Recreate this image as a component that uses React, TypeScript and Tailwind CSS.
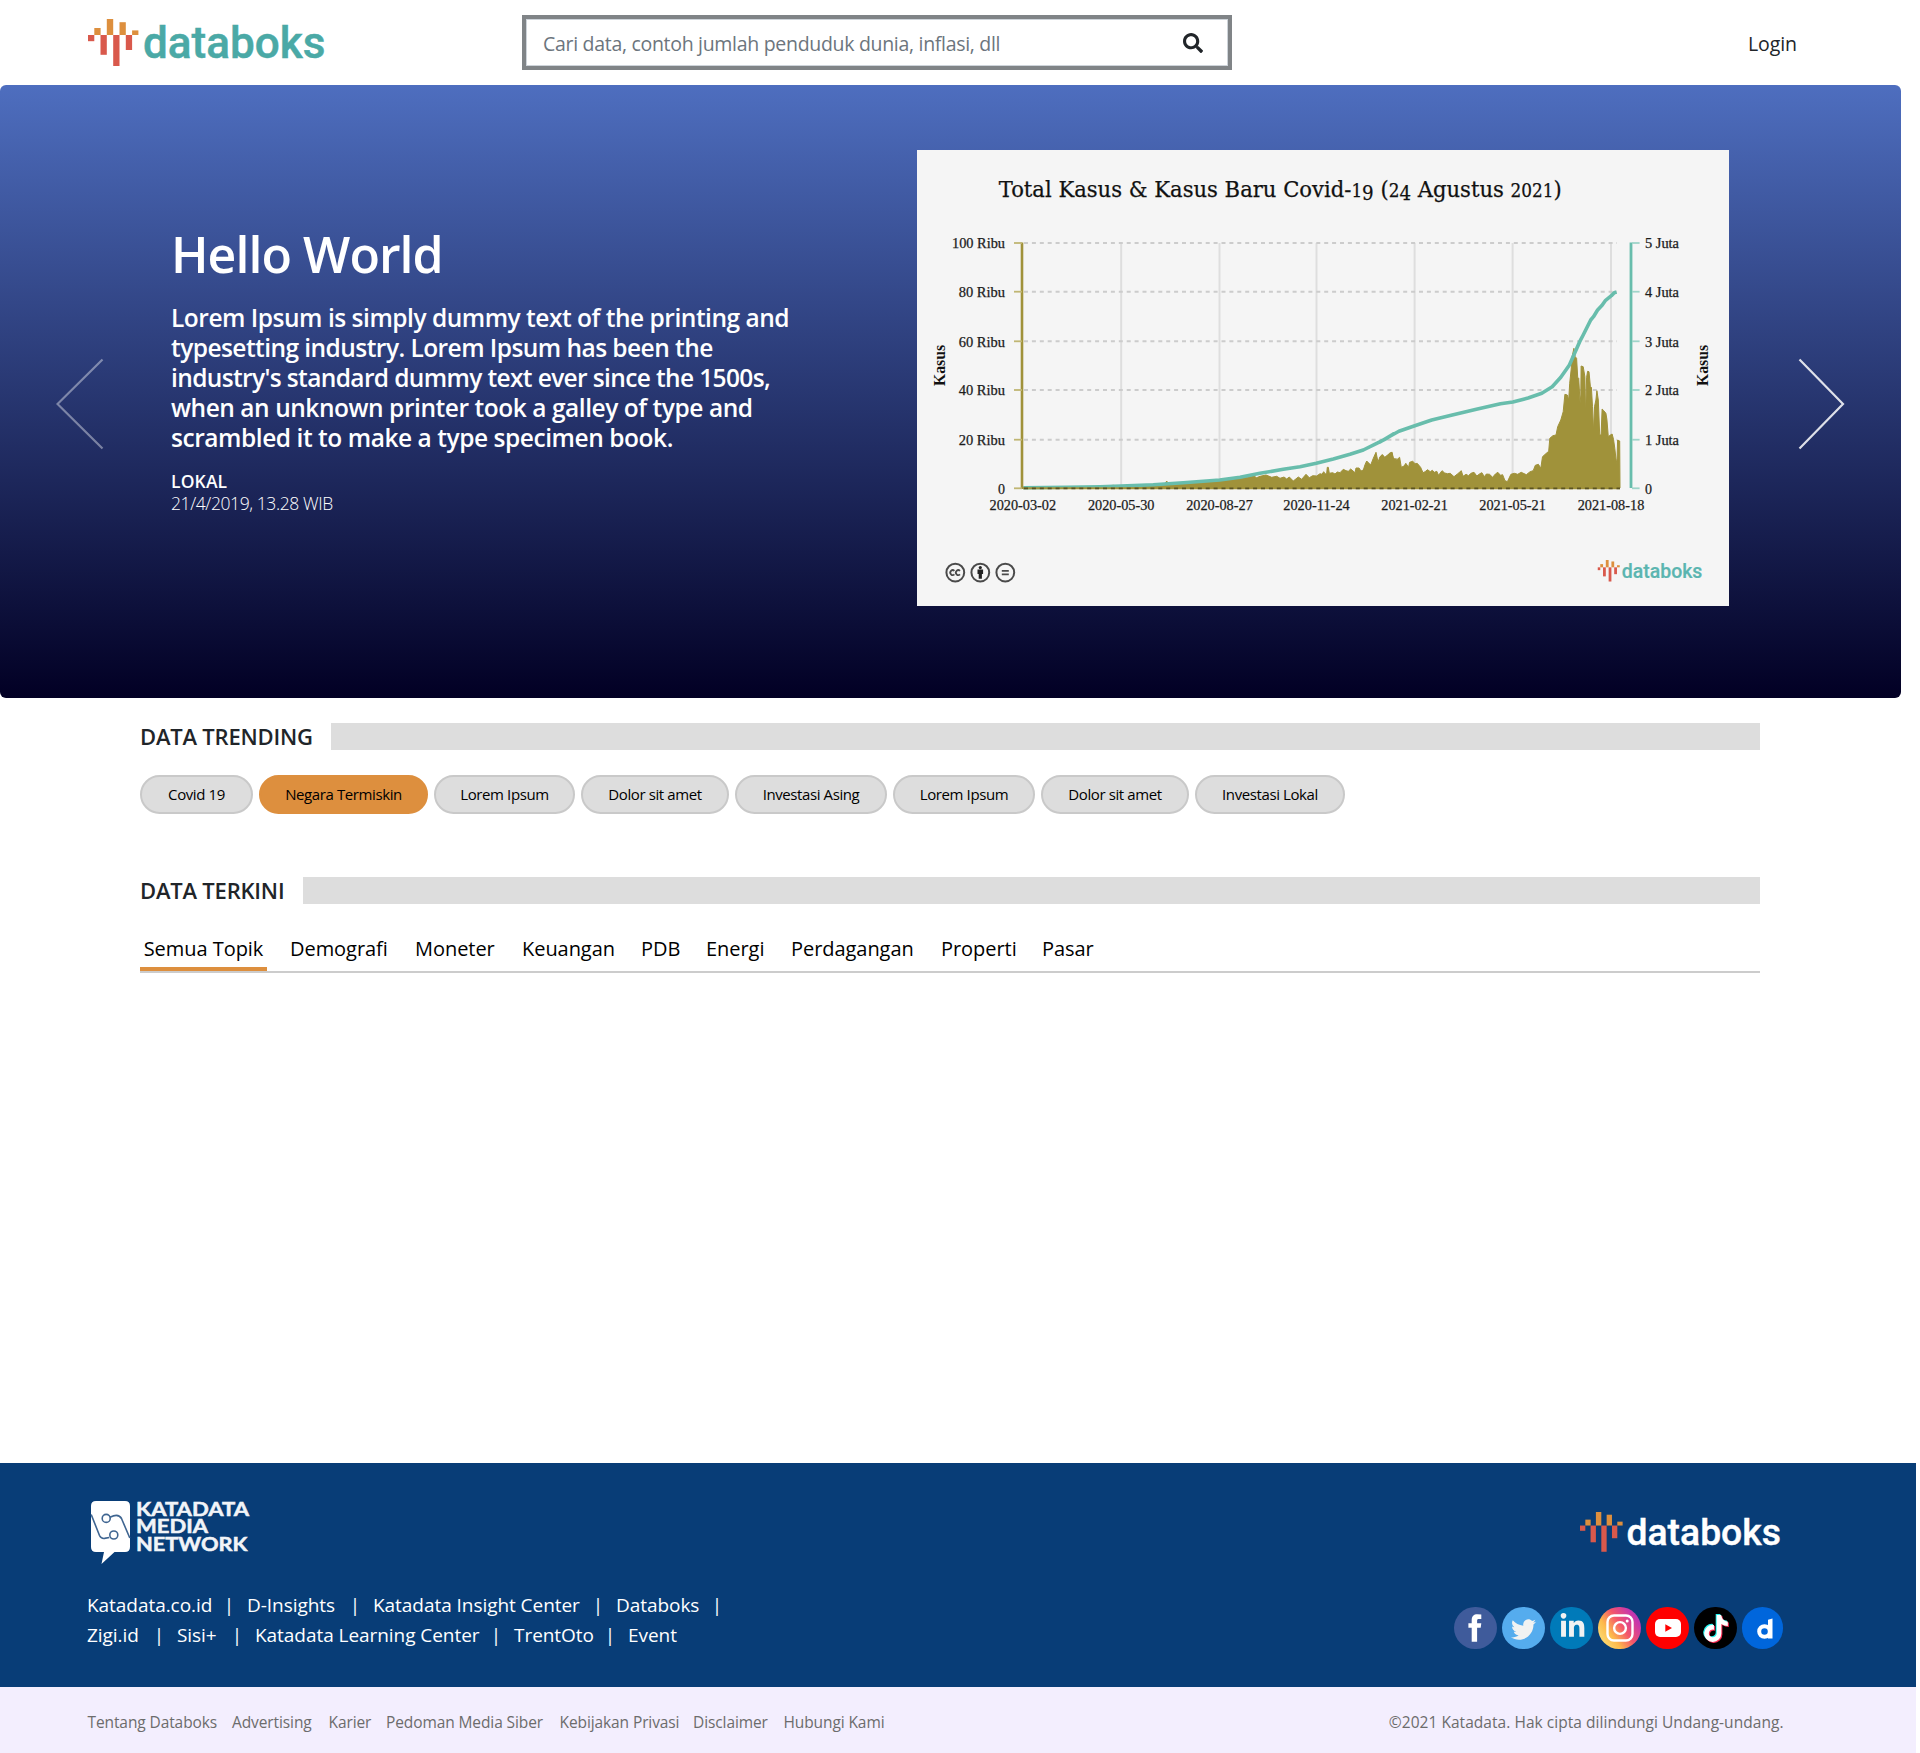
import React from "react";
import { FaSearch, FaTwitter, FaLinkedinIn, FaTiktok } from "react-icons/fa";

type Point = [number, number];

const toPath = (pts: Point[]) => pts.map(([x, y], i) => `${i ? "L" : "M"}${x} ${y}`).join("");

function DataboksLogo({ className, color }: { className: string; color: string }) {
  return (
    <svg viewBox="0 0 240 52" preserveAspectRatio="none" className={`${className} overflow-visible`} aria-label="databoks">
      <g fill="#d9594c">
        <rect x="0" y="16" width="6.3" height="6.2" />
        <rect x="12.5" y="16" width="6.3" height="19.8" />
        <rect x="25.2" y="16" width="6.3" height="31" />
        <rect x="37.8" y="16" width="6.3" height="15" />
      </g>
      <g fill="#dd8f3e">
        <rect x="6.3" y="9" width="6.3" height="7" />
        <rect x="18.8" y="0" width="6.4" height="16" />
        <rect x="31.5" y="3.2" width="6.3" height="12.8" />
        <rect x="44.1" y="11.4" width="6.3" height="4.6" />
      </g>
      <text
        x="55"
        y="39.3"
        fontFamily="Roboto"
        fontWeight="500"
        fontSize="44.5"
        textLength="182.5"
        lengthAdjust="spacingAndGlyphs"
        fill={color}
        stroke={color}
        strokeWidth="0.5"
      >
        databoks
      </text>
    </svg>
  );
}

/* Daily new cases, as an outline in chart coordinates. */
const barsLeft: Point[] = [
  [370, 1044], [500, 1042], [600, 1040], [640, 1036], [660, 1039], [700, 1035], [760, 1033], [795, 1032], [800, 1023], [805, 1031],
  [850, 1030], [900, 1026], [959, 1023], [1000, 1018], [1030, 1014], [1050, 1010], [1060, 1007], [1070, 1013], [1080, 1009],
  [1098, 1005], [1115, 1012], [1130, 1009], [1140, 1015], [1152, 1011], [1160, 1017], [1168, 1011], [1180, 1023],
  [1195, 1011], [1205, 1018], [1218, 1003], [1228, 1013], [1238, 1007], [1250, 1008], [1260, 1001], [1266, 1003], [1271, 995],
  [1276, 1002], [1280, 1000], [1282, 982], [1285, 982], [1288, 1000], [1298, 998], [1305, 1002], [1312, 996], [1320, 998], [1330, 988],
  [1338, 992], [1345, 994], [1352, 987], [1365, 998], [1368, 984], [1377, 984], [1383, 993], [1390, 990], [1395, 974], [1400, 963],
  [1412, 975], [1420, 955], [1428, 937], [1434, 966], [1440, 950], [1447, 944], [1453, 955], [1462, 952], [1468, 940], [1475, 937],
  [1482, 964], [1490, 957],
];
const barsRight: Point[] = [
  [0, 952], [7, 944], [14, 952], [22, 945], [35, 937], [40, 962], [48, 960], [57, 952], [62, 982], [70, 978], [75, 970], [83, 982],
  [86, 967], [95, 964], [102, 971], [108, 970], [118, 982], [125, 998], [131, 995], [138, 989], [146, 995], [152, 991], [158, 997],
  [165, 994], [170, 1006], [180, 992], [188, 999], [196, 1001], [204, 1000], [215, 1010], [226, 1001], [236, 992], [241, 1009],
  [250, 1003], [257, 1007], [264, 1000], [273, 997], [281, 1008], [290, 1001], [296, 998], [303, 1010], [309, 1002], [318, 1003],
  [327, 1012], [335, 1002], [342, 997], [350, 1006], [356, 1004], [363, 1022], [370, 1025], [380, 1003], [390, 1000], [400, 1003],
  [410, 997], [425, 1004], [436, 995], [445, 992], [451, 976], [460, 973], [467, 985], [472, 950], [483, 940], [490, 934],
  [493, 895], [502, 887], [511, 885], [516, 860], [525, 840], [532, 815], [537, 763], [544, 765], [548, 780], [551, 730], [555, 690],
  [558, 650], [563, 625], [567, 650], [571, 655], [574, 712], [577, 715], [581, 790], [583, 765], [584, 678], [590, 680], [595, 710],
  [597, 830], [600, 712], [603, 694], [607, 695], [611, 740], [614, 742], [617, 800], [620, 876], [623, 800], [627, 780], [630, 752],
  [634, 780], [638, 885], [642, 885], [645, 807], [650, 812], [656, 820], [659, 838], [663, 890], [669, 885], [674, 882], [678, 898],
  [682, 925], [685, 955], [688, 972], [690, 900], [696, 903], [697, 1044],
];
const lineLeft: Point[] = [
  [370, 1043], [500, 1042], [600, 1040], [663, 1038], [760, 1034], [850, 1028], [959, 1020], [1020, 1012], [1080, 1000], [1150, 988],
  [1200, 980], [1249, 970], [1300, 957], [1350, 943], [1390, 930], [1430, 910], [1460, 895], [1480, 882],
];
const lineRight: Point[] = [
  [0, 906], [25, 891], [55, 874], [101, 857], [150, 840], [210, 825], [280, 808], [350, 791], [386, 786], [430, 774], [470, 760],
  [500, 740], [525, 712], [550, 675], [565, 640], [580, 605], [590, 585], [612, 540], [620, 530], [632, 510], [645, 496], [655, 481], [672, 467], [680, 458],
  [687, 456],
];
const fromLeft = (pts: Point[]): Point[] => pts.map(([x, y]) => [+(x / 3 - 17).toFixed(1), +(y / 3 - 10).toFixed(1)]);
const fromRight = (pts: Point[]): Point[] => pts.map(([x, y]) => [+(x / 2.904 + 463).toFixed(1), +(y / 3 - 10).toFixed(1)]);
const barShape = [...fromLeft(barsLeft), ...fromRight(barsRight)];
const totalLine = [...fromLeft(lineLeft), ...fromRight(lineRight)];

const rows = [93, 141.7, 191.3, 240, 289.7, 338.3];
const leftLabels: [string, number][] = [["100 Ribu", 53], ["80 Ribu", 46.3], ["60 Ribu", 46.3], ["40 Ribu", 46.3], ["20 Ribu", 46.3], ["0", 7]];
const rightLabels: [string, number][] = [["5 Juta", 34], ["4 Juta", 34], ["3 Juta", 34], ["2 Juta", 34], ["1 Juta", 34], ["0", 7]];
const dates: [string, number][] = [
  ["2020-03-02", 105.8], ["2020-05-30", 204.2], ["2020-08-27", 302.5], ["2020-11-24", 399.5],
  ["2021-02-21", 497.6], ["2021-05-21", 595.6], ["2021-08-18", 694],
];

function CovidChart() {
  return (
    <svg viewBox="0 0 812 456" className="block h-[456px] w-[812px] bg-[#f5f5f5]">
      <text
        x="81.7"
        y="47"
        fontFamily="DejaVu Serif, serif"
        fontSize="23.2"
        fill="#111"
        stroke="#111"
        strokeWidth="0.25"
        textLength="563"
        lengthAdjust="spacingAndGlyphs"
      >
        Total Kasus &amp; Kasus Baru Covid-<tspan fontSize="18.5">1</tspan>
        <tspan fontSize="20" dy="3">9</tspan>
        <tspan dy="-3"> (</tspan>
        <tspan fontSize="18.5">2</tspan>
        <tspan fontSize="20" dy="3">4</tspan>
        <tspan dy="-3"> Agustus </tspan>
        <tspan fontSize="18.5">2021</tspan>
        <tspan>)</tspan>
      </text>

      {dates.slice(1).map(([d, x]) => (
        <line key={d} x1={x} x2={x} y1="93" y2="338" stroke="#dedede" strokeWidth="2" />
      ))}
      {rows.slice(0, 5).map((y) => (
        <line key={y} x1="107" x2="700" y1={y} y2={y} stroke="#cccccc" strokeWidth="2" strokeDasharray="4 3.9" />
      ))}

      <path d={`${toPath(barShape)}Z`} fill="#a0923a" stroke="#a0923a" strokeWidth="1" />
      <path d={toPath(totalLine)} fill="none" stroke="#68bdac" strokeWidth="3.6" strokeLinejoin="round" />
      <line x1="106" x2="703" y1="338.3" y2="338.3" stroke="#a0923a" strokeWidth="2" />
      <line x1="107" x2="703" y1="338.3" y2="338.3" stroke="#5b5322" strokeWidth="1.8" strokeDasharray="4 3.9" />

      <line x1="105" x2="105" y1="92.5" y2="339" stroke="#a0923a" strokeWidth="2.6" />
      <line x1="714" x2="714" y1="92.5" y2="338" stroke="#68bdac" strokeWidth="2.8" />
      {rows.map((y, i) => (
        <g key={y}>
          <line x1="97" x2="105" y1={y} y2={y} stroke="#c0b673" strokeWidth="1.8" />
          <line x1="715" x2="722.6" y1={y} y2={y} stroke="#9fd4c9" strokeWidth="1.8" />
          <g fontFamily="Liberation Serif, serif" fontSize="13.6" fill="#1c1c1c" stroke="#1c1c1c" strokeWidth="0.25">
            <text x={88 - leftLabels[i][1]} y={y + 5.4} textLength={leftLabels[i][1]} lengthAdjust="spacingAndGlyphs">
              {leftLabels[i][0]}
            </text>
            <text x="728" y={y + 5.4} textLength={rightLabels[i][1]} lengthAdjust="spacingAndGlyphs">
              {rightLabels[i][0]}
            </text>
          </g>
        </g>
      ))}
      <g fontFamily="Liberation Serif, serif" fontSize="13.6" fill="#1c1c1c" stroke="#1c1c1c" strokeWidth="0.25">
        {dates.map(([d, x]) => (
          <text key={d} x={x - 33.3} y="360.4" textLength="66.6" lengthAdjust="spacingAndGlyphs">
            {d}
          </text>
        ))}
      </g>
      <g fontFamily="Liberation Serif, serif" fontWeight="700" fontSize="16" fill="#111">
        <text transform="translate(27.6 236) rotate(-90)" textLength="41" lengthAdjust="spacingAndGlyphs">Kasus</text>
        <text transform="translate(790.8 236) rotate(-90)" textLength="41" lengthAdjust="spacingAndGlyphs">Kasus</text>
      </g>

      <g fill="none" stroke="#4a4a4a" strokeWidth="2">
        <circle cx="38.3" cy="422.6" r="8.9" />
        <circle cx="63.3" cy="422.6" r="8.9" />
        <circle cx="88.3" cy="422.6" r="8.9" />
        <path d="M37.4 420.9a2.4 2.4 0 1 0 0 3.4M43 420.9a2.4 2.4 0 1 0 0 3.4" strokeWidth="1.8" />
        <path d="M84.8 420.9h7M84.8 424.3h7" strokeWidth="1.8" />
      </g>
      <g fill="#222">
        <circle cx="63.3" cy="417.6" r="1.6" />
        <path d="M60.5 419.5h5.600v4.600h-1.200v4.700h-3.200v-4.700h-1.200z" />
      </g>
      <svg x="680.5" y="410" width="106" height="23.8">
        <DataboksLogo className="h-[23.8px] w-[106px]" color="#5bb5b0" />
      </svg>
    </svg>
  );
}

function KatadataLogo() {
  return (
    <svg viewBox="0 0 170 66" className="block h-[66px] w-[170px] overflow-visible" aria-label="Katadata Media Network">
      <path d="M8 1h29q5 0 5 5v41q0 5-5 5H26.500L13.500 64 16 52H8q-5 0-5-5V6q0-5 5-5z" fill="#fff" />
      <g fill="none" stroke="#3f6591" strokeWidth="1.600">
        <path d="M3.200 14.500 11.500 35.500q1.500 3.300 5 2.900l4.800-.9" />
        <circle cx="25.800" cy="35" r="4" />
        <circle cx="18.200" cy="18.400" r="4" />
        <path d="M22 17.200q8.500-4.200 11.500 1.300L41.800 38" />
      </g>
      <g fontFamily="Lato, sans-serif" fontWeight="700" fontSize="18.600" fill="#f1f4f8" stroke="#f1f4f8" strokeWidth="0.5">
        <text x="48" y="15.500" textLength="113" lengthAdjust="spacingAndGlyphs">KATADATA</text>
        <text x="48" y="33.300" textLength="72" lengthAdjust="spacingAndGlyphs">MEDIA</text>
        <text x="48" y="51" textLength="111.500" lengthAdjust="spacingAndGlyphs">NETWORK</text>
      </g>
    </svg>
  );
}

function SectionTitle({ title, width }: { title: string; width: string }) {
  return (
    <div className="flex h-[27px] items-center">
      <h2 className={`${width} shrink-0 whitespace-nowrap text-[22px] font-semibold leading-[27px] tracking-[-0.2px] text-[#212529]`}>{title}</h2>
      <div className="h-[27px] flex-1 bg-[#dddddd]" />
    </div>
  );
}

const pills: [string, string][] = [
  ["Covid 19", "w-[113px]"], ["Negara Termiskin", "w-[169px]"], ["Lorem Ipsum", "w-[141px]"], ["Dolor sit amet", "w-[148px]"],
  ["Investasi Asing", "w-[152px]"], ["Lorem Ipsum", "w-[142px]"], ["Dolor sit amet", "w-[148px]"], ["Investasi Lokal", "w-[150px]"],
];

const tabs: [string, string][] = [
  ["Semua Topik", "w-[127px]"], ["Demografi", "w-[107px]"], ["Moneter", "w-[89px]"], ["Keuangan", "w-[101px]"], ["PDB", "w-[47px]"],
  ["Energi", "w-[67px]"], ["Perdagangan", "w-[132px]"], ["Properti", "w-[83px]"], ["Pasar", "w-[58px]"],
];

const networkRows: [string, string][][] = [
  [["Katadata.co.id", "w-[124px]"], ["D-Insights", "w-[90px]"], ["Katadata Insight Center", "w-[207px]"], ["Databoks", "w-[83px]"]],
  [["Zigi.id", "w-[54px]"], ["Sisi+", "w-[42px]"], ["Katadata Learning Center", "w-[223px]"], ["TrentOto", "w-[78px]"], ["Event", "w-[50px]"]],
];

const legalLinks: [string, string][] = [
  ["Tentang Databoks", "w-[129px]"], ["Advertising", "w-[81px]"], ["Karier", "w-[42px]"], ["Pedoman Media Siber", "w-[158px]"],
  ["Kebijakan Privasi", "w-[118px]"], ["Disclaimer", "w-[75px]"], ["Hubungi Kami", "w-[104px]"],
];

const round = "relative flex h-[42px] w-[43px] items-center justify-center rounded-full";

function SocialLinks() {
  return (
    <div className="flex gap-[5px]">
      <span className={`${round} bg-[#3f5b9b]`}>
        <svg viewBox="0 0 14 28" className="mr-[2px] h-[28px] w-[14px]">
          <path d="M13.300.400v4.500h-2.500c-1.300 0-1.700.600-1.700 1.600v2.700h4.200l-.600 4.600H9.100V27.700H3.700V13.800H.400V9.200h3.300V5.900C3.700 2.200 5.900.200 9.300.200z" fill="#fff" />
        </svg>
      </span>
      <span className={`${round} bg-[#55acee]`}>
        <FaTwitter className="mt-[3px] h-[25px] w-[25px] text-[#f1f2f2]" />
      </span>
      <span className={`${round} bg-[#007ab9]`}>
        <FaLinkedinIn className="mb-[3px] ml-[2px] h-[27px] w-[27px] text-[#f1f2f2]" />
      </span>
      <span className={`${round} bg-[linear-gradient(55deg,#fbe07a_8%,#fdba4b_32%,#f4566a_55%,#c837ab_80%,#9c3fc0_100%)]`}>
        <svg viewBox="0 0 28 28" className="h-[28px] w-[28px]" fill="none" stroke="#fff" strokeWidth="2.400">
          <rect x="1.500" y="1.500" width="25" height="25" rx="6.500" />
          <circle cx="14" cy="14" r="5.900" />
          <circle cx="21.200" cy="7" r="1.500" fill="#fff" stroke="none" />
        </svg>
      </span>
      <span className={`${round} bg-[#ff0000]`}>
        <svg viewBox="0 0 26 18" className="h-[18px] w-[26px]">
          <rect width="26" height="18" rx="5" fill="#fff" />
          <path d="M10.300 5.200v7.600L17 9z" fill="#f00" />
        </svg>
      </span>
      <span className={`${round} bg-black`}>
        <FaTiktok className="absolute left-[9px] top-[7px] h-[27px] w-[24px] text-[#25f4ee]" />
        <FaTiktok className="absolute left-[11px] top-[9px] h-[27px] w-[24px] text-[#fe2c55]" />
        <FaTiktok className="absolute left-[10px] top-[8px] h-[27px] w-[24px] text-white" />
      </span>
      <span className="flex h-[42px] w-[41px] items-center justify-center rounded-full bg-[#0066dc]">
        <svg viewBox="0 0 16 21" className="ml-1 h-[21px] w-[16px]">
          <circle cx="7.500" cy="13.500" r="5.300" fill="none" stroke="#fff" strokeWidth="4" />
          <path d="M11 1.800 15.500.5v20H11z" fill="#fff" />
        </svg>
      </span>
    </div>
  );
}

export default function App() {
  return (
    <div className="flex h-[1753px] w-[1920px] flex-col overflow-hidden bg-white font-['Open_Sans','Noto_Sans',sans-serif] text-[#212529]">
      <header className="flex h-[85px] shrink-0 items-start pl-[88px] pt-[15px]">
        <DataboksLogo className="mt-1 h-[52px] w-[240px]" color="#4aa9a6" />
        <div className="ml-[194px] h-[55px] w-[710px] bg-[#808487] p-1">
          <div className="flex h-[47px] items-center justify-between border border-[#ced4da] bg-white pl-[16px] pr-[24px]">
            <span className="mt-[3px] text-[19.500px] leading-[28px] tracking-[-0.3px] text-[#6c757d]">Cari data, contoh jumlah penduduk dunia, inflasi, dll</span>
            <FaSearch className="h-[20px] w-[20px] text-[#212529]" />
          </div>
        </div>
        <a className="ml-[516px] mt-[15px] text-[19.500px] leading-[28px] tracking-[-0.1px]">Login</a>
      </header>

      <section className="flex h-[613px] w-[1901px] shrink-0 rounded-[6px] bg-[linear-gradient(180deg,#4e6ebf_0%,#020024_100%)] text-white">
        <svg viewBox="0 0 48 92" className="ml-[56px] mt-[273px] h-[92px] w-[48px] opacity-40" fill="none" stroke="#fff" strokeWidth="2.200">
          <path d="M46.500 1.500 1.500 46l45 44.500" />
        </svg>
        <div className="ml-[67px] w-[746px] pt-[139px]">
          <h1 className="text-[50px] font-semibold leading-[60px] tracking-[-0.95px]">Hello World</h1>
          <p className="mt-[19px] whitespace-nowrap text-[24.500px] font-semibold leading-[30px] tracking-[-0.48px]">
            Lorem Ipsum is simply dummy text of the printing and
            <br />
            <span className="tracking-[-0.55px]">typesetting industry. Lorem Ipsum has been the</span>
            <br />
            <span className="tracking-[-0.63px]">industry's standard dummy text ever since the 1500s,</span>
            <br />
            <span className="tracking-[-0.45px]">when an unknown printer took a galley of type and</span>
            <br />
            <span className="tracking-[-0.45px]">scrambled it to make a type specimen book.</span>
          </p>
          <p className="mt-[17px] text-[17.500px] font-semibold leading-[22px] tracking-[0.15px]">LOKAL</p>
          <p className="text-[17.500px] font-light leading-[22px] tracking-[-0.4px]">21/4/2019, 13.28 WIB</p>
        </div>
        <div className="pt-[65px]">
          <CovidChart />
        </div>
        <svg viewBox="0 0 48 92" className="ml-[69px] mt-[273px] h-[92px] w-[48px] opacity-85" fill="none" stroke="#fff" strokeWidth="2.200">
          <path d="M1.500 1.500 45 46 1.500 90.500" />
        </svg>
      </section>

      <main className="ml-[140px] flex w-[1620px] shrink-0 flex-col pt-[25px]">
        <SectionTitle title="DATA TRENDING" width="w-[191px]" />
        <div className="mt-[25px] flex gap-[6px]">
          {pills.map(([label, width], i) => (
            <span
              key={i}
              className={`${width} flex h-[39px] items-center justify-center whitespace-nowrap rounded-[20px] border-2 text-[15px] tracking-[-0.4px] text-black ${
                i === 1 ? "border-[#dd8f3e] bg-[#dd8f3e]" : "border-[#c9c9c9] bg-[#dddddd]"
              }`}
            >
              {label}
            </span>
          ))}
        </div>
        <div className="mt-[63px]">
          <SectionTitle title="DATA TERKINI" width="w-[163px]" />
        </div>
        <nav className="mt-[27px] flex h-[42px] border-b-2 border-[#cccccc]">
          {tabs.map(([label, width], i) => (
            <a
              key={label}
              className={`${width} h-[40px] shrink-0 whitespace-nowrap text-[20px] leading-[35px] tracking-[-0.05px] text-black ${
                i === 0 ? "mr-[23px] border-b-4 border-[#dd8f3e] text-center" : i < 8 ? "mr-[18px]" : ""
              }`}
            >
              {label}
            </a>
          ))}
        </nav>
      </main>

      <footer className="mt-auto w-[1916px] shrink-0">
        <div className="flex h-[224px] justify-between bg-[#083d77] pl-[88px] pr-[133px] text-white">
          <div className="pt-[37px]">
            <KatadataLogo />
            <div className="-ml-px mt-[24px]">
              {networkRows.map((row, r) => (
                <div key={r} className="flex h-[30px] text-[19px] leading-[30px] tracking-[-0.05px]">
                  {row.map(([label, width], i) => (
                    <React.Fragment key={label}>
                      <a className={`${width} shrink-0 whitespace-nowrap`}>{label}</a>
                      {(r === 0 || i < row.length - 1) && <span className="w-[36px] shrink-0 text-center">|</span>}
                    </React.Fragment>
                  ))}
                </div>
              ))}
            </div>
          </div>
          <div className="flex flex-col items-end pt-[49px]">
            <DataboksLogo className="h-[44px] w-[203px]" color="#ffffff" />
            <div className="mt-[51px]">
              <SocialLinks />
            </div>
          </div>
        </div>
        <div className="flex h-[66px] items-start justify-between bg-[#f3eefe] pl-[87.500px] pr-[132.500px] pt-[23px] text-[15.500px] leading-[24px] text-[#6c6c6c]">
          <nav className="flex gap-[15.500px] tracking-[-0.1px]">
            {legalLinks.map(([label, width]) => (
              <a key={label} className={`${width} shrink-0 whitespace-nowrap`}>
                {label}
              </a>
            ))}
          </nav>
          <span className="tracking-[0.04px]">©2021 Katadata. Hak cipta dilindungi Undang-undang.</span>
        </div>
      </footer>
    </div>
  );
}
